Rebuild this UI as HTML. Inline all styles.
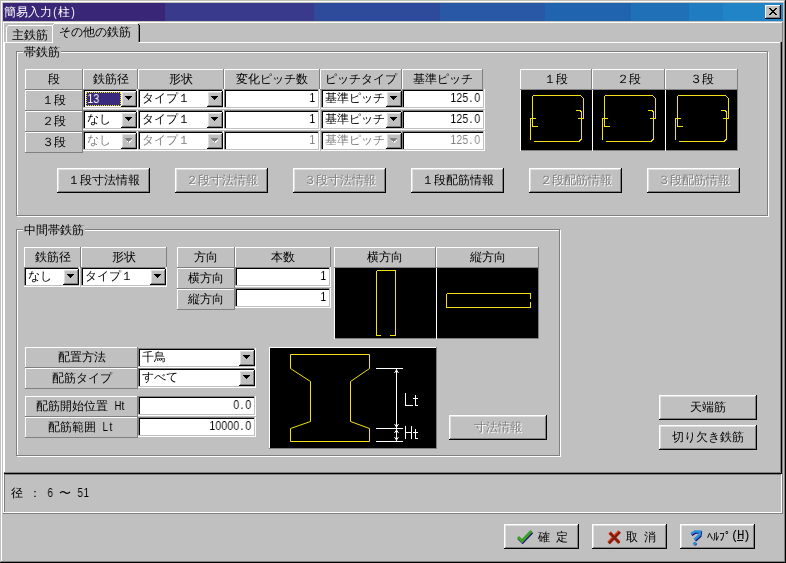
<!DOCTYPE html><html><head><meta charset="utf-8"><style>
*{box-sizing:border-box;margin:0;padding:0}
html,body{width:786px;height:563px;overflow:hidden}
body{background:#c0c0c0;position:relative;font-family:"Liberation Sans",sans-serif;font-size:12px;color:#000}
.a{position:absolute}
.t{white-space:nowrap;overflow:visible;will-change:transform}
</style></head><body>
<div class="a" style="left:0px;top:0px;width:786px;height:563px;box-shadow:inset -1px -1px #000,inset 1px 1px #c0c0c0,inset -2px -2px #808080,inset 2px 2px #fff"></div>
<div class="a" style="left:3px;top:3px;width:162px;height:18px;background:#3a2676"></div>
<div class="a" style="left:165px;top:3px;width:149px;height:18px;background:#3a3a8c"></div>
<div class="a" style="left:314px;top:3px;width:126px;height:18px;background:#2e4a9a"></div>
<div class="a" style="left:440px;top:3px;width:105px;height:18px;background:#2858a6"></div>
<div class="a" style="left:545px;top:3px;width:86px;height:18px;background:#2064b0"></div>
<div class="a" style="left:631px;top:3px;width:58px;height:18px;background:#2070b8"></div>
<div class="a" style="left:689px;top:3px;width:34px;height:18px;background:#1f7cc0"></div>
<div class="a" style="left:723px;top:3px;width:60px;height:18px;background:#2084c6"></div>
<div class="a t" style="left:4px;top:5px;width:12px;height:14px;line-height:14px;text-align:center;color:#fff">簡</div>
<div class="a t" style="left:16px;top:5px;width:12px;height:14px;line-height:14px;text-align:center;color:#fff">易</div>
<div class="a t" style="left:28px;top:5px;width:12px;height:14px;line-height:14px;text-align:center;color:#fff">入</div>
<div class="a t" style="left:40px;top:5px;width:12px;height:14px;line-height:14px;text-align:center;color:#fff">力</div>
<div class="a t" style="left:52px;top:5px;width:6px;height:14px;line-height:14px;text-align:center;transform:scaleX(0.8);color:#fff">(</div>
<div class="a t" style="left:58px;top:5px;width:12px;height:14px;line-height:14px;text-align:center;color:#fff">柱</div>
<div class="a t" style="left:70px;top:5px;width:6px;height:14px;line-height:14px;text-align:center;transform:scaleX(0.8);color:#fff">)</div>
<div class="a" style="left:765px;top:5px;width:16px;height:14px;background:#c0c0c0;box-shadow:inset -1px -1px #000,inset 1px 1px #fff,inset -2px -2px #808080"></div>
<svg class="a" style="left:769px;top:8px" width="8" height="7" shape-rendering="crispEdges"><path d="M0 0h2v1h1v1h2v-1h1v-1h2v1h-1v1h-1v1h-1v1h1v1h1v1h1v1h-2v-1h-1v-1h-2v1h-1v1h-2v-1h1v-1h1v-1h1v-1h-1v-1h-1v-1h-1z" fill="#000"/></svg>
<div class="a" style="left:3px;top:22px;width:780px;height:492px;box-shadow:inset -1px -1px #808080,inset 1px 1px #fff"></div>
<div class="a" style="left:4px;top:42px;width:778px;height:432px;box-shadow:inset -1px -1px #000,inset -2px -2px #808080,inset 1px 1px #fff"></div>
<div class="a" style="left:8px;top:25px;width:44px;height:1px;background:#fff"></div>
<div class="a" style="left:7px;top:26px;width:1px;height:1px;background:#fff"></div>
<div class="a" style="left:6px;top:27px;width:1px;height:15px;background:#fff"></div>
<div class="a t" style="left:12px;top:28px;width:40px;height:14px;line-height:14px;">主鉄筋</div>
<div class="a" style="left:53px;top:24px;width:86px;height:19px;background:#c0c0c0"></div>
<div class="a" style="left:54px;top:23px;width:84px;height:1px;background:#fff"></div>
<div class="a" style="left:53px;top:24px;width:1px;height:1px;background:#fff"></div>
<div class="a" style="left:52px;top:25px;width:1px;height:18px;background:#fff"></div>
<div class="a" style="left:138px;top:24px;width:1px;height:1px;background:#000"></div>
<div class="a" style="left:139px;top:25px;width:1px;height:17px;background:#000"></div>
<div class="a" style="left:138px;top:25px;width:1px;height:17px;background:#808080"></div>
<div class="a t" style="left:59px;top:25px;width:80px;height:14px;line-height:14px;">その他の鉄筋</div>
<div class="a" style="left:17px;top:52px;width:752px;height:165px;border:1px solid #fff"></div>
<div class="a" style="left:16px;top:51px;width:752px;height:165px;border:1px solid #808080"></div>
<div class="a t" style="left:23px;top:45px;width:38px;height:14px;line-height:14px;background:#c0c0c0;padding-left:1px">帯鉄筋</div>
<div class="a" style="left:25px;top:69px;width:58px;height:21px;background:#c0c0c0;box-shadow:inset -1px -1px #808080,inset 1px 1px #fff"></div>
<div class="a t" style="left:25px;top:69px;width:58px;height:21px;line-height:21px;text-align:center">段</div>
<div class="a" style="left:83px;top:69px;width:55px;height:21px;background:#c0c0c0;box-shadow:inset -1px -1px #808080,inset 1px 1px #fff"></div>
<div class="a t" style="left:83px;top:69px;width:55px;height:21px;line-height:21px;text-align:center">鉄筋径</div>
<div class="a" style="left:138px;top:69px;width:86px;height:21px;background:#c0c0c0;box-shadow:inset -1px -1px #808080,inset 1px 1px #fff"></div>
<div class="a t" style="left:138px;top:69px;width:86px;height:21px;line-height:21px;text-align:center">形状</div>
<div class="a" style="left:224px;top:69px;width:96px;height:21px;background:#c0c0c0;box-shadow:inset -1px -1px #808080,inset 1px 1px #fff"></div>
<div class="a t" style="left:224px;top:69px;width:96px;height:21px;line-height:21px;text-align:center">変化ピッチ数</div>
<div class="a" style="left:320px;top:69px;width:82px;height:21px;background:#c0c0c0;box-shadow:inset -1px -1px #808080,inset 1px 1px #fff"></div>
<div class="a t" style="left:320px;top:69px;width:82px;height:21px;line-height:21px;text-align:center">ピッチタイプ</div>
<div class="a" style="left:402px;top:69px;width:81px;height:21px;background:#c0c0c0;box-shadow:inset -1px -1px #808080,inset 1px 1px #fff"></div>
<div class="a t" style="left:402px;top:69px;width:81px;height:21px;line-height:21px;text-align:center">基準ピッチ</div>
<div class="a" style="left:25px;top:90px;width:58px;height:21px;background:#c0c0c0;box-shadow:inset -1px -1px #808080,inset 1px 1px #fff"></div>
<div class="a t" style="left:25px;top:90px;width:58px;height:21px;line-height:21px;text-align:center">１段</div>
<div class="a" style="left:25px;top:111px;width:58px;height:21px;background:#c0c0c0;box-shadow:inset -1px -1px #808080,inset 1px 1px #fff"></div>
<div class="a t" style="left:25px;top:111px;width:58px;height:21px;line-height:21px;text-align:center">２段</div>
<div class="a" style="left:25px;top:132px;width:58px;height:21px;background:#c0c0c0;box-shadow:inset -1px -1px #808080,inset 1px 1px #fff"></div>
<div class="a t" style="left:25px;top:132px;width:58px;height:21px;line-height:21px;text-align:center">３段</div>
<div class="a" style="left:83px;top:89px;width:55px;height:20px;background:#fff;box-shadow:inset -1px -1px #fff,inset -2px -2px #c0c0c0,inset 1px 1px #808080,inset 2px 2px #000"></div>
<div class="a" style="left:86px;top:92px;width:35px;height:14px;background:#3a2a7e;border:1px dotted #f0f000"></div>
<div class="a t" style="left:87px;top:92px;width:6px;height:14px;line-height:14px;text-align:center;transform:scaleX(0.85);color:#fff;">1</div>
<div class="a t" style="left:93px;top:92px;width:6px;height:14px;line-height:14px;text-align:center;transform:scaleX(0.85);color:#fff;">3</div>
<div class="a" style="left:121px;top:91px;width:16px;height:16px;background:#c0c0c0;box-shadow:inset -1px -1px #000,inset 1px 1px #fff,inset -2px -2px #808080,inset 2px 2px #dfdfdf"></div>
<svg class="a" style="left:125px;top:96px" width="7" height="4" shape-rendering="crispEdges"><path d="M0 0h7v1h-1v1h-1v1h-1v1h-1v-1h-1v-1h-1v-1h-1z" fill="#000"/></svg>
<div class="a" style="left:138px;top:89px;width:86px;height:20px;background:#fff;box-shadow:inset -1px -1px #fff,inset -2px -2px #c0c0c0,inset 1px 1px #808080,inset 2px 2px #000"></div>
<div class="a t" style="left:142px;top:91px;width:65px;height:15px;line-height:15px;">タイプ１</div>
<div class="a" style="left:207px;top:91px;width:16px;height:16px;background:#c0c0c0;box-shadow:inset -1px -1px #000,inset 1px 1px #fff,inset -2px -2px #808080,inset 2px 2px #dfdfdf"></div>
<svg class="a" style="left:211px;top:96px" width="7" height="4" shape-rendering="crispEdges"><path d="M0 0h7v1h-1v1h-1v1h-1v1h-1v-1h-1v-1h-1v-1h-1z" fill="#000"/></svg>
<div class="a" style="left:224px;top:89px;width:96px;height:20px;background:#fff;box-shadow:inset -1px -1px #fff,inset -2px -2px #c0c0c0,inset 1px 1px #808080,inset 2px 2px #000"></div>
<div class="a t" style="left:309px;top:91px;width:6px;height:14px;line-height:14px;text-align:center;transform:scaleX(0.85);">1</div>
<div class="a" style="left:321px;top:89px;width:82px;height:20px;background:#fff;box-shadow:inset -1px -1px #fff,inset -2px -2px #c0c0c0,inset 1px 1px #808080,inset 2px 2px #000"></div>
<div class="a t" style="left:325px;top:91px;width:61px;height:15px;line-height:15px;">基準ピッチ</div>
<div class="a" style="left:386px;top:91px;width:16px;height:16px;background:#c0c0c0;box-shadow:inset -1px -1px #000,inset 1px 1px #fff,inset -2px -2px #808080,inset 2px 2px #dfdfdf"></div>
<svg class="a" style="left:390px;top:96px" width="7" height="4" shape-rendering="crispEdges"><path d="M0 0h7v1h-1v1h-1v1h-1v1h-1v-1h-1v-1h-1v-1h-1z" fill="#000"/></svg>
<div class="a" style="left:402px;top:89px;width:83px;height:20px;background:#fff;box-shadow:inset -1px -1px #fff,inset -2px -2px #c0c0c0,inset 1px 1px #808080,inset 2px 2px #000"></div>
<div class="a t" style="left:450px;top:91px;width:6px;height:14px;line-height:14px;text-align:center;transform:scaleX(0.85);">1</div>
<div class="a t" style="left:456px;top:91px;width:6px;height:14px;line-height:14px;text-align:center;transform:scaleX(0.85);">2</div>
<div class="a t" style="left:462px;top:91px;width:6px;height:14px;line-height:14px;text-align:center;transform:scaleX(0.85);">5</div>
<div class="a t" style="left:468px;top:91px;width:6px;height:14px;line-height:14px;text-align:center;transform:scaleX(0.85);">.</div>
<div class="a t" style="left:474px;top:91px;width:6px;height:14px;line-height:14px;text-align:center;transform:scaleX(0.85);">0</div>
<div class="a" style="left:83px;top:110px;width:55px;height:20px;background:#fff;box-shadow:inset -1px -1px #fff,inset -2px -2px #c0c0c0,inset 1px 1px #808080,inset 2px 2px #000"></div>
<div class="a t" style="left:87px;top:112px;width:34px;height:15px;line-height:15px;">なし</div>
<div class="a" style="left:121px;top:112px;width:16px;height:16px;background:#c0c0c0;box-shadow:inset -1px -1px #000,inset 1px 1px #fff,inset -2px -2px #808080,inset 2px 2px #dfdfdf"></div>
<svg class="a" style="left:125px;top:117px" width="7" height="4" shape-rendering="crispEdges"><path d="M0 0h7v1h-1v1h-1v1h-1v1h-1v-1h-1v-1h-1v-1h-1z" fill="#000"/></svg>
<div class="a" style="left:138px;top:110px;width:86px;height:20px;background:#fff;box-shadow:inset -1px -1px #fff,inset -2px -2px #c0c0c0,inset 1px 1px #808080,inset 2px 2px #000"></div>
<div class="a t" style="left:142px;top:112px;width:65px;height:15px;line-height:15px;">タイプ１</div>
<div class="a" style="left:207px;top:112px;width:16px;height:16px;background:#c0c0c0;box-shadow:inset -1px -1px #000,inset 1px 1px #fff,inset -2px -2px #808080,inset 2px 2px #dfdfdf"></div>
<svg class="a" style="left:211px;top:117px" width="7" height="4" shape-rendering="crispEdges"><path d="M0 0h7v1h-1v1h-1v1h-1v1h-1v-1h-1v-1h-1v-1h-1z" fill="#000"/></svg>
<div class="a" style="left:224px;top:110px;width:96px;height:20px;background:#fff;box-shadow:inset -1px -1px #fff,inset -2px -2px #c0c0c0,inset 1px 1px #808080,inset 2px 2px #000"></div>
<div class="a t" style="left:309px;top:112px;width:6px;height:14px;line-height:14px;text-align:center;transform:scaleX(0.85);">1</div>
<div class="a" style="left:321px;top:110px;width:82px;height:20px;background:#fff;box-shadow:inset -1px -1px #fff,inset -2px -2px #c0c0c0,inset 1px 1px #808080,inset 2px 2px #000"></div>
<div class="a t" style="left:325px;top:112px;width:61px;height:15px;line-height:15px;">基準ピッチ</div>
<div class="a" style="left:386px;top:112px;width:16px;height:16px;background:#c0c0c0;box-shadow:inset -1px -1px #000,inset 1px 1px #fff,inset -2px -2px #808080,inset 2px 2px #dfdfdf"></div>
<svg class="a" style="left:390px;top:117px" width="7" height="4" shape-rendering="crispEdges"><path d="M0 0h7v1h-1v1h-1v1h-1v1h-1v-1h-1v-1h-1v-1h-1z" fill="#000"/></svg>
<div class="a" style="left:402px;top:110px;width:83px;height:20px;background:#fff;box-shadow:inset -1px -1px #fff,inset -2px -2px #c0c0c0,inset 1px 1px #808080,inset 2px 2px #000"></div>
<div class="a t" style="left:450px;top:112px;width:6px;height:14px;line-height:14px;text-align:center;transform:scaleX(0.85);">1</div>
<div class="a t" style="left:456px;top:112px;width:6px;height:14px;line-height:14px;text-align:center;transform:scaleX(0.85);">2</div>
<div class="a t" style="left:462px;top:112px;width:6px;height:14px;line-height:14px;text-align:center;transform:scaleX(0.85);">5</div>
<div class="a t" style="left:468px;top:112px;width:6px;height:14px;line-height:14px;text-align:center;transform:scaleX(0.85);">.</div>
<div class="a t" style="left:474px;top:112px;width:6px;height:14px;line-height:14px;text-align:center;transform:scaleX(0.85);">0</div>
<div class="a" style="left:83px;top:131px;width:55px;height:20px;background:#fff;box-shadow:inset -1px -1px #fff,inset -2px -2px #c0c0c0,inset 1px 1px #808080,inset 2px 2px #000"></div>
<div class="a t" style="left:87px;top:133px;width:34px;height:15px;line-height:15px;color:#808080;">なし</div>
<div class="a" style="left:121px;top:133px;width:16px;height:16px;background:#c0c0c0;box-shadow:inset -1px -1px #000,inset 1px 1px #fff,inset -2px -2px #808080,inset 2px 2px #dfdfdf"></div>
<svg class="a" style="left:125px;top:138px" width="8" height="5" shape-rendering="crispEdges"><path d="M2 3h4v1h-4zM6 2h1v1h-1zM5 4h-1v1h1z" fill="#fff"/><path d="M0 0h7v1h-1v1h-1v1h-1v1h-1v-1h-1v-1h-1v-1h-1z" fill="#808080"/></svg>
<div class="a" style="left:138px;top:131px;width:86px;height:20px;background:#fff;box-shadow:inset -1px -1px #fff,inset -2px -2px #c0c0c0,inset 1px 1px #808080,inset 2px 2px #000"></div>
<div class="a t" style="left:142px;top:133px;width:65px;height:15px;line-height:15px;color:#808080;">タイプ１</div>
<div class="a" style="left:207px;top:133px;width:16px;height:16px;background:#c0c0c0;box-shadow:inset -1px -1px #000,inset 1px 1px #fff,inset -2px -2px #808080,inset 2px 2px #dfdfdf"></div>
<svg class="a" style="left:211px;top:138px" width="8" height="5" shape-rendering="crispEdges"><path d="M2 3h4v1h-4zM6 2h1v1h-1zM5 4h-1v1h1z" fill="#fff"/><path d="M0 0h7v1h-1v1h-1v1h-1v1h-1v-1h-1v-1h-1v-1h-1z" fill="#808080"/></svg>
<div class="a" style="left:224px;top:131px;width:96px;height:20px;background:#fff;box-shadow:inset -1px -1px #fff,inset -2px -2px #c0c0c0,inset 1px 1px #808080,inset 2px 2px #000"></div>
<div class="a t" style="left:309px;top:133px;width:6px;height:14px;line-height:14px;text-align:center;transform:scaleX(0.85);color:#808080;">1</div>
<div class="a" style="left:321px;top:131px;width:82px;height:20px;background:#fff;box-shadow:inset -1px -1px #fff,inset -2px -2px #c0c0c0,inset 1px 1px #808080,inset 2px 2px #000"></div>
<div class="a t" style="left:325px;top:133px;width:61px;height:15px;line-height:15px;color:#808080;">基準ピッチ</div>
<div class="a" style="left:386px;top:133px;width:16px;height:16px;background:#c0c0c0;box-shadow:inset -1px -1px #000,inset 1px 1px #fff,inset -2px -2px #808080,inset 2px 2px #dfdfdf"></div>
<svg class="a" style="left:390px;top:138px" width="8" height="5" shape-rendering="crispEdges"><path d="M2 3h4v1h-4zM6 2h1v1h-1zM5 4h-1v1h1z" fill="#fff"/><path d="M0 0h7v1h-1v1h-1v1h-1v1h-1v-1h-1v-1h-1v-1h-1z" fill="#808080"/></svg>
<div class="a" style="left:402px;top:131px;width:83px;height:20px;background:#fff;box-shadow:inset -1px -1px #fff,inset -2px -2px #c0c0c0,inset 1px 1px #808080,inset 2px 2px #000"></div>
<div class="a t" style="left:450px;top:133px;width:6px;height:14px;line-height:14px;text-align:center;transform:scaleX(0.85);color:#808080;">1</div>
<div class="a t" style="left:456px;top:133px;width:6px;height:14px;line-height:14px;text-align:center;transform:scaleX(0.85);color:#808080;">2</div>
<div class="a t" style="left:462px;top:133px;width:6px;height:14px;line-height:14px;text-align:center;transform:scaleX(0.85);color:#808080;">5</div>
<div class="a t" style="left:468px;top:133px;width:6px;height:14px;line-height:14px;text-align:center;transform:scaleX(0.85);color:#808080;">.</div>
<div class="a t" style="left:474px;top:133px;width:6px;height:14px;line-height:14px;text-align:center;transform:scaleX(0.85);color:#808080;">0</div>
<div class="a" style="left:520px;top:69px;width:72px;height:21px;background:#c0c0c0;box-shadow:inset -1px -1px #808080,inset 1px 1px #fff"></div>
<div class="a t" style="left:520px;top:69px;width:72px;height:21px;line-height:21px;text-align:center">１段</div>
<div class="a" style="left:520px;top:90px;width:72px;height:61px;background:#000;box-shadow:inset 1px 0 #fff,inset 0 -1px #808080"></div>
<div class="a" style="left:592px;top:69px;width:73px;height:21px;background:#c0c0c0;box-shadow:inset -1px -1px #808080,inset 1px 1px #fff"></div>
<div class="a t" style="left:592px;top:69px;width:73px;height:21px;line-height:21px;text-align:center">２段</div>
<div class="a" style="left:592px;top:90px;width:73px;height:61px;background:#000;box-shadow:inset 1px 0 #fff,inset 0 -1px #808080"></div>
<div class="a" style="left:665px;top:69px;width:73px;height:21px;background:#c0c0c0;box-shadow:inset -1px -1px #808080,inset 1px 1px #fff"></div>
<div class="a t" style="left:665px;top:69px;width:73px;height:21px;line-height:21px;text-align:center">３段</div>
<div class="a" style="left:665px;top:90px;width:73px;height:61px;background:#000;box-shadow:inset 1px 0 #fff,inset 0 -1px #808080,inset -1px 0 #808080"></div>
<svg class="a" style="left:0;top:0" width="786" height="563" shape-rendering="crispEdges"><path d="M533 95.5H580.5L583.5 98.5V118.5H578M532.5 96V126.5H538M576 110.5H580L581.5 112V139L579 141.5H534M530.5 140V118.5H536M605 95.5H652.5L655.5 98.5V118.5H650M604.5 96V126.5H610M648 110.5H652L653.5 112V139L651 141.5H606M602.5 140V118.5H608M678 95.5H725.5L728.5 98.5V118.5H723M677.5 96V126.5H683M721 110.5H725L726.5 112V139L724 141.5H679M675.5 140V118.5H681" stroke="#f2e01a" stroke-width="1" fill="none"/></svg>
<div class="a" style="left:57px;top:168px;width:93px;height:25px;background:#c0c0c0;box-shadow:inset -1px -1px #000,inset 1px 1px #fff,inset -2px -2px #808080,inset 2px 2px #dfdfdf"></div>
<div class="a t" style="left:57px;top:168px;width:93px;height:25px;line-height:25px;text-align:center;">１段寸法情報</div>
<div class="a" style="left:175px;top:168px;width:93px;height:25px;background:#c0c0c0;box-shadow:inset -1px -1px #000,inset 1px 1px #fff,inset -2px -2px #808080,inset 2px 2px #dfdfdf"></div>
<div class="a t" style="left:175px;top:168px;width:93px;height:25px;line-height:25px;text-align:center;color:#808080;text-shadow:1px 1px #fff;">２段寸法情報</div>
<div class="a" style="left:293px;top:168px;width:93px;height:25px;background:#c0c0c0;box-shadow:inset -1px -1px #000,inset 1px 1px #fff,inset -2px -2px #808080,inset 2px 2px #dfdfdf"></div>
<div class="a t" style="left:293px;top:168px;width:93px;height:25px;line-height:25px;text-align:center;color:#808080;text-shadow:1px 1px #fff;">３段寸法情報</div>
<div class="a" style="left:411px;top:168px;width:93px;height:25px;background:#c0c0c0;box-shadow:inset -1px -1px #000,inset 1px 1px #fff,inset -2px -2px #808080,inset 2px 2px #dfdfdf"></div>
<div class="a t" style="left:411px;top:168px;width:93px;height:25px;line-height:25px;text-align:center;">１段配筋情報</div>
<div class="a" style="left:529px;top:168px;width:93px;height:25px;background:#c0c0c0;box-shadow:inset -1px -1px #000,inset 1px 1px #fff,inset -2px -2px #808080,inset 2px 2px #dfdfdf"></div>
<div class="a t" style="left:529px;top:168px;width:93px;height:25px;line-height:25px;text-align:center;color:#808080;text-shadow:1px 1px #fff;">２段配筋情報</div>
<div class="a" style="left:647px;top:168px;width:93px;height:25px;background:#c0c0c0;box-shadow:inset -1px -1px #000,inset 1px 1px #fff,inset -2px -2px #808080,inset 2px 2px #dfdfdf"></div>
<div class="a t" style="left:647px;top:168px;width:93px;height:25px;line-height:25px;text-align:center;color:#808080;text-shadow:1px 1px #fff;">３段配筋情報</div>
<div class="a" style="left:17px;top:230px;width:544px;height:227px;border:1px solid #fff"></div>
<div class="a" style="left:16px;top:229px;width:544px;height:227px;border:1px solid #808080"></div>
<div class="a t" style="left:23px;top:223px;width:62px;height:14px;line-height:14px;background:#c0c0c0;padding-left:1px">中間帯鉄筋</div>
<div class="a" style="left:24px;top:247px;width:57px;height:21px;background:#c0c0c0;box-shadow:inset -1px -1px #808080,inset 1px 1px #fff"></div>
<div class="a t" style="left:24px;top:247px;width:57px;height:21px;line-height:21px;text-align:center">鉄筋径</div>
<div class="a" style="left:81px;top:247px;width:86px;height:21px;background:#c0c0c0;box-shadow:inset -1px -1px #808080,inset 1px 1px #fff"></div>
<div class="a t" style="left:81px;top:247px;width:86px;height:21px;line-height:21px;text-align:center">形状</div>
<div class="a" style="left:24px;top:267px;width:56px;height:20px;background:#fff;box-shadow:inset -1px -1px #fff,inset -2px -2px #c0c0c0,inset 1px 1px #808080,inset 2px 2px #000"></div>
<div class="a t" style="left:28px;top:269px;width:35px;height:15px;line-height:15px;">なし</div>
<div class="a" style="left:63px;top:269px;width:16px;height:16px;background:#c0c0c0;box-shadow:inset -1px -1px #000,inset 1px 1px #fff,inset -2px -2px #808080,inset 2px 2px #dfdfdf"></div>
<svg class="a" style="left:67px;top:274px" width="7" height="4" shape-rendering="crispEdges"><path d="M0 0h7v1h-1v1h-1v1h-1v1h-1v-1h-1v-1h-1v-1h-1z" fill="#000"/></svg>
<div class="a" style="left:81px;top:267px;width:86px;height:20px;background:#fff;box-shadow:inset -1px -1px #fff,inset -2px -2px #c0c0c0,inset 1px 1px #808080,inset 2px 2px #000"></div>
<div class="a t" style="left:85px;top:269px;width:65px;height:15px;line-height:15px;">タイプ１</div>
<div class="a" style="left:150px;top:269px;width:16px;height:16px;background:#c0c0c0;box-shadow:inset -1px -1px #000,inset 1px 1px #fff,inset -2px -2px #808080,inset 2px 2px #dfdfdf"></div>
<svg class="a" style="left:154px;top:274px" width="7" height="4" shape-rendering="crispEdges"><path d="M0 0h7v1h-1v1h-1v1h-1v1h-1v-1h-1v-1h-1v-1h-1z" fill="#000"/></svg>
<div class="a" style="left:177px;top:247px;width:58px;height:21px;background:#c0c0c0;box-shadow:inset -1px -1px #808080,inset 1px 1px #fff"></div>
<div class="a t" style="left:177px;top:247px;width:58px;height:21px;line-height:21px;text-align:center">方向</div>
<div class="a" style="left:235px;top:247px;width:96px;height:21px;background:#c0c0c0;box-shadow:inset -1px -1px #808080,inset 1px 1px #fff"></div>
<div class="a t" style="left:235px;top:247px;width:96px;height:21px;line-height:21px;text-align:center">本数</div>
<div class="a" style="left:177px;top:268px;width:58px;height:21px;background:#c0c0c0;box-shadow:inset -1px -1px #808080,inset 1px 1px #fff"></div>
<div class="a t" style="left:177px;top:268px;width:58px;height:21px;line-height:21px;text-align:center">横方向</div>
<div class="a" style="left:177px;top:289px;width:58px;height:21px;background:#c0c0c0;box-shadow:inset -1px -1px #808080,inset 1px 1px #fff"></div>
<div class="a t" style="left:177px;top:289px;width:58px;height:21px;line-height:21px;text-align:center">縦方向</div>
<div class="a" style="left:235px;top:267px;width:96px;height:20px;background:#fff;box-shadow:inset -1px -1px #fff,inset -2px -2px #c0c0c0,inset 1px 1px #808080,inset 2px 2px #000"></div>
<div class="a t" style="left:320px;top:269px;width:6px;height:14px;line-height:14px;text-align:center;transform:scaleX(0.85);">1</div>
<div class="a" style="left:235px;top:288px;width:96px;height:20px;background:#fff;box-shadow:inset -1px -1px #fff,inset -2px -2px #c0c0c0,inset 1px 1px #808080,inset 2px 2px #000"></div>
<div class="a t" style="left:320px;top:290px;width:6px;height:14px;line-height:14px;text-align:center;transform:scaleX(0.85);">1</div>
<div class="a" style="left:334px;top:247px;width:102px;height:21px;background:#c0c0c0;box-shadow:inset -1px -1px #808080,inset 1px 1px #fff"></div>
<div class="a t" style="left:334px;top:247px;width:102px;height:21px;line-height:21px;text-align:center">横方向</div>
<div class="a" style="left:334px;top:268px;width:102px;height:71px;background:#000;box-shadow:inset 1px 0 #fff,inset 0 -1px #808080"></div>
<div class="a" style="left:436px;top:247px;width:103px;height:21px;background:#c0c0c0;box-shadow:inset -1px -1px #808080,inset 1px 1px #fff"></div>
<div class="a t" style="left:436px;top:247px;width:103px;height:21px;line-height:21px;text-align:center">縦方向</div>
<div class="a" style="left:436px;top:268px;width:103px;height:71px;background:#000;box-shadow:inset 1px 0 #fff,inset 0 -1px #808080,inset -1px 0 #808080"></div>
<svg class="a" style="left:0;top:0" width="786" height="563" shape-rendering="crispEdges"><path d="M376.5 271V335.5H380.5M377 270.5H395.5V335.5H390M446.5 294V307.5H530.5V302M447 293.5H530.5V299" stroke="#f2e01a" fill="none"/></svg>
<div class="a" style="left:25px;top:347px;width:113px;height:21px;background:#c0c0c0;box-shadow:inset -1px -1px #808080,inset 1px 1px #fff"></div>
<div class="a t" style="left:25px;top:347px;width:113px;height:21px;line-height:21px;text-align:center">配置方法</div>
<div class="a" style="left:25px;top:368px;width:113px;height:21px;background:#c0c0c0;box-shadow:inset -1px -1px #808080,inset 1px 1px #fff"></div>
<div class="a t" style="left:25px;top:368px;width:113px;height:21px;line-height:21px;text-align:center">配筋タイプ</div>
<div class="a" style="left:25px;top:396px;width:113px;height:21px;background:#c0c0c0;box-shadow:inset -1px -1px #808080,inset 1px 1px #fff"></div>
<div class="a t" style="left:36px;top:399px;width:12px;height:14px;line-height:14px;text-align:center;">配</div>
<div class="a t" style="left:48px;top:399px;width:12px;height:14px;line-height:14px;text-align:center;">筋</div>
<div class="a t" style="left:60px;top:399px;width:12px;height:14px;line-height:14px;text-align:center;">開</div>
<div class="a t" style="left:72px;top:399px;width:12px;height:14px;line-height:14px;text-align:center;">始</div>
<div class="a t" style="left:84px;top:399px;width:12px;height:14px;line-height:14px;text-align:center;">位</div>
<div class="a t" style="left:96px;top:399px;width:12px;height:14px;line-height:14px;text-align:center;">置</div>
<div class="a t" style="left:114px;top:399px;width:6px;height:14px;line-height:14px;text-align:center;transform:scaleX(0.8);">H</div>
<div class="a t" style="left:120px;top:399px;width:6px;height:14px;line-height:14px;text-align:center;transform:scaleX(0.8);">t</div>
<div class="a" style="left:25px;top:417px;width:113px;height:21px;background:#c0c0c0;box-shadow:inset -1px -1px #808080,inset 1px 1px #fff"></div>
<div class="a t" style="left:48px;top:420px;width:12px;height:14px;line-height:14px;text-align:center;">配</div>
<div class="a t" style="left:60px;top:420px;width:12px;height:14px;line-height:14px;text-align:center;">筋</div>
<div class="a t" style="left:72px;top:420px;width:12px;height:14px;line-height:14px;text-align:center;">範</div>
<div class="a t" style="left:84px;top:420px;width:12px;height:14px;line-height:14px;text-align:center;">囲</div>
<div class="a t" style="left:102px;top:420px;width:6px;height:14px;line-height:14px;text-align:center;transform:scaleX(0.8);">L</div>
<div class="a t" style="left:108px;top:420px;width:6px;height:14px;line-height:14px;text-align:center;transform:scaleX(0.8);">t</div>
<div class="a" style="left:138px;top:348px;width:118px;height:20px;background:#fff;box-shadow:inset -1px -1px #fff,inset -2px -2px #c0c0c0,inset 1px 1px #808080,inset 2px 2px #000"></div>
<div class="a t" style="left:142px;top:350px;width:97px;height:15px;line-height:15px;">千鳥</div>
<div class="a" style="left:239px;top:350px;width:16px;height:16px;background:#c0c0c0;box-shadow:inset -1px -1px #000,inset 1px 1px #fff,inset -2px -2px #808080,inset 2px 2px #dfdfdf"></div>
<svg class="a" style="left:243px;top:355px" width="7" height="4" shape-rendering="crispEdges"><path d="M0 0h7v1h-1v1h-1v1h-1v1h-1v-1h-1v-1h-1v-1h-1z" fill="#000"/></svg>
<div class="a" style="left:138px;top:368px;width:118px;height:20px;background:#fff;box-shadow:inset -1px -1px #fff,inset -2px -2px #c0c0c0,inset 1px 1px #808080,inset 2px 2px #000"></div>
<div class="a t" style="left:142px;top:370px;width:97px;height:15px;line-height:15px;">すべて</div>
<div class="a" style="left:239px;top:370px;width:16px;height:16px;background:#c0c0c0;box-shadow:inset -1px -1px #000,inset 1px 1px #fff,inset -2px -2px #808080,inset 2px 2px #dfdfdf"></div>
<svg class="a" style="left:243px;top:375px" width="7" height="4" shape-rendering="crispEdges"><path d="M0 0h7v1h-1v1h-1v1h-1v1h-1v-1h-1v-1h-1v-1h-1z" fill="#000"/></svg>
<div class="a" style="left:138px;top:396px;width:118px;height:20px;background:#fff;box-shadow:inset -1px -1px #fff,inset -2px -2px #c0c0c0,inset 1px 1px #808080,inset 2px 2px #000"></div>
<div class="a t" style="left:233px;top:398px;width:6px;height:14px;line-height:14px;text-align:center;transform:scaleX(0.85);">0</div>
<div class="a t" style="left:239px;top:398px;width:6px;height:14px;line-height:14px;text-align:center;transform:scaleX(0.85);">.</div>
<div class="a t" style="left:245px;top:398px;width:6px;height:14px;line-height:14px;text-align:center;transform:scaleX(0.85);">0</div>
<div class="a" style="left:138px;top:417px;width:118px;height:20px;background:#fff;box-shadow:inset -1px -1px #fff,inset -2px -2px #c0c0c0,inset 1px 1px #808080,inset 2px 2px #000"></div>
<div class="a t" style="left:209px;top:419px;width:6px;height:14px;line-height:14px;text-align:center;transform:scaleX(0.85);">1</div>
<div class="a t" style="left:215px;top:419px;width:6px;height:14px;line-height:14px;text-align:center;transform:scaleX(0.85);">0</div>
<div class="a t" style="left:221px;top:419px;width:6px;height:14px;line-height:14px;text-align:center;transform:scaleX(0.85);">0</div>
<div class="a t" style="left:227px;top:419px;width:6px;height:14px;line-height:14px;text-align:center;transform:scaleX(0.85);">0</div>
<div class="a t" style="left:233px;top:419px;width:6px;height:14px;line-height:14px;text-align:center;transform:scaleX(0.85);">0</div>
<div class="a t" style="left:239px;top:419px;width:6px;height:14px;line-height:14px;text-align:center;transform:scaleX(0.85);">.</div>
<div class="a t" style="left:245px;top:419px;width:6px;height:14px;line-height:14px;text-align:center;transform:scaleX(0.85);">0</div>
<div class="a" style="left:269px;top:347px;width:168px;height:102px;background:#000;box-shadow:inset -1px -1px #808080,inset 1px 1px #fff"></div>
<svg class="a" style="left:0;top:0" width="786" height="563"><path d="M290.5 354.5H369.5V368.5L350.5 381.5V421.5L369.5 428.5V441.5H290.5V428.5L310.5 421.5V381.5L290.5 368.5Z" stroke="#f2e01a" fill="none"/><path d="M376 368.5H403M376 428.5H403M376 441.5H403M396.5 369V441" stroke="#fff" fill="none" shape-rendering="crispEdges"/><path d="M394.5 373L396.5 370L398.5 373M394.5 424L396.5 427L398.5 424M394.5 433L396.5 430L398.5 433M394.5 437L396.5 440L398.5 437" stroke="#fff" fill="none"/></svg>
<svg class="a" style="left:0;top:0" width="786" height="563" shape-rendering="crispEdges"><path d="M405 393h1v12h7v1h-8zM415 395h1v3h2v1h-2v6h2v1h-2v0h-1v-7h-2v-1h2zM405 426h1v6h5v-6h1v13h-1v-6h-5v6h-1zM415 429h1v3h2v1h-2v5h2v1h-3v-6h-2v-1h2z" fill="#fff"/></svg>
<div class="a" style="left:449px;top:415px;width:98px;height:25px;background:#c0c0c0;box-shadow:inset -1px -1px #000,inset 1px 1px #fff,inset -2px -2px #808080,inset 2px 2px #dfdfdf"></div>
<div class="a t" style="left:449px;top:415px;width:98px;height:25px;line-height:25px;text-align:center;color:#808080;text-shadow:1px 1px #fff">寸法情報</div>
<div class="a" style="left:659px;top:395px;width:98px;height:25px;background:#c0c0c0;box-shadow:inset -1px -1px #000,inset 1px 1px #fff,inset -2px -2px #808080,inset 2px 2px #dfdfdf"></div>
<div class="a t" style="left:659px;top:395px;width:98px;height:25px;line-height:25px;text-align:center">天端筋</div>
<div class="a" style="left:659px;top:425px;width:98px;height:25px;background:#c0c0c0;box-shadow:inset -1px -1px #000,inset 1px 1px #fff,inset -2px -2px #808080,inset 2px 2px #dfdfdf"></div>
<div class="a t" style="left:659px;top:425px;width:98px;height:25px;line-height:25px;text-align:center">切り欠き鉄筋</div>
<div class="a" style="left:4px;top:474px;width:778px;height:39px;box-shadow:inset -1px -1px #fff,inset 1px 1px #808080"></div>
<div class="a t" style="left:11px;top:486px;width:12px;height:14px;line-height:14px;text-align:center;">径</div>
<div class="a t" style="left:29px;top:486px;width:12px;height:14px;line-height:14px;text-align:center;">：</div>
<div class="a t" style="left:47px;top:486px;width:6px;height:14px;line-height:14px;text-align:center;transform:scaleX(0.8);font-size:12px;">6</div>
<div class="a t" style="left:59px;top:486px;width:12px;height:14px;line-height:14px;text-align:center;">〜</div>
<div class="a t" style="left:77px;top:486px;width:6px;height:14px;line-height:14px;text-align:center;transform:scaleX(0.8);font-size:12px;">5</div>
<div class="a t" style="left:83px;top:486px;width:6px;height:14px;line-height:14px;text-align:center;transform:scaleX(0.8);font-size:12px;">1</div>
<div class="a" style="left:504px;top:524px;width:75px;height:25px;background:#c0c0c0;box-shadow:inset -1px -1px #000,inset 1px 1px #fff,inset -2px -2px #808080,inset 2px 2px #dfdfdf"></div>
<svg class="a" style="left:512px;top:526px" width="24" height="20"><path d="M6 11L10 15L19.5 5" stroke="#20107a" stroke-width="3" fill="none" transform="translate(0.6,1.2)"/><path d="M6 11L10 15L19.5 5" stroke="#3aa02a" stroke-width="3" fill="none"/></svg>
<div class="a t" style="left:538px;top:530px;width:12px;height:14px;line-height:14px;text-align:center;">確</div>
<div class="a t" style="left:556px;top:530px;width:12px;height:14px;line-height:14px;text-align:center;">定</div>
<div class="a" style="left:592px;top:524px;width:75px;height:25px;background:#c0c0c0;box-shadow:inset -1px -1px #000,inset 1px 1px #fff,inset -2px -2px #808080,inset 2px 2px #dfdfdf"></div>
<svg class="a" style="left:602px;top:526px" width="24" height="22"><path d="M7.5 6.5L17 16.5M17.5 5.5L6.5 17" stroke="#e03a18" stroke-width="3.4" fill="none"/><path d="M7.5 6.5L17 16.5M17.5 5.5L6.5 17" stroke="#7a1e10" stroke-width="2.2" fill="none" transform="translate(0.5,0.5)"/></svg>
<div class="a t" style="left:626px;top:530px;width:12px;height:14px;line-height:14px;text-align:center;">取</div>
<div class="a t" style="left:644px;top:530px;width:12px;height:14px;line-height:14px;text-align:center;">消</div>
<div class="a" style="left:680px;top:524px;width:75px;height:25px;background:#c0c0c0;box-shadow:inset -1px -1px #000,inset 1px 1px #fff,inset -2px -2px #808080,inset 2px 2px #dfdfdf"></div>
<svg class="a" style="left:684px;top:526px" width="24" height="24"><path d="M7 8L11 5.5H16L15.5 9L10.5 13.5" stroke="#1a0a70" stroke-width="2.6" fill="none" transform="translate(0.7,1)"/><path d="M7 8L11 5.5H16L15.5 9L10.5 13.5" stroke="#2a90d8" stroke-width="2.6" fill="none"/><circle cx="11.2" cy="18" r="1.6" fill="#1a0a70"/><circle cx="10.8" cy="17.4" r="1.6" fill="#2a90d8"/></svg>
<div class="a t" style="left:707px;top:530px;width:6px;height:14px;line-height:14px;text-align:center;">ﾍ</div>
<div class="a t" style="left:713px;top:530px;width:6px;height:14px;line-height:14px;text-align:center;">ﾙ</div>
<div class="a t" style="left:719px;top:530px;width:6px;height:14px;line-height:14px;text-align:center;">ﾌ</div>
<div class="a t" style="left:725px;top:530px;width:6px;height:14px;line-height:14px;text-align:center;">ﾟ</div>
<div class="a t" style="left:731px;top:528px;width:24px;height:17px;line-height:17px;font-family:'Liberation Mono',monospace;font-size:12.5px;letter-spacing:-1.5px">(<u>H</u>)</div>
</body></html>
